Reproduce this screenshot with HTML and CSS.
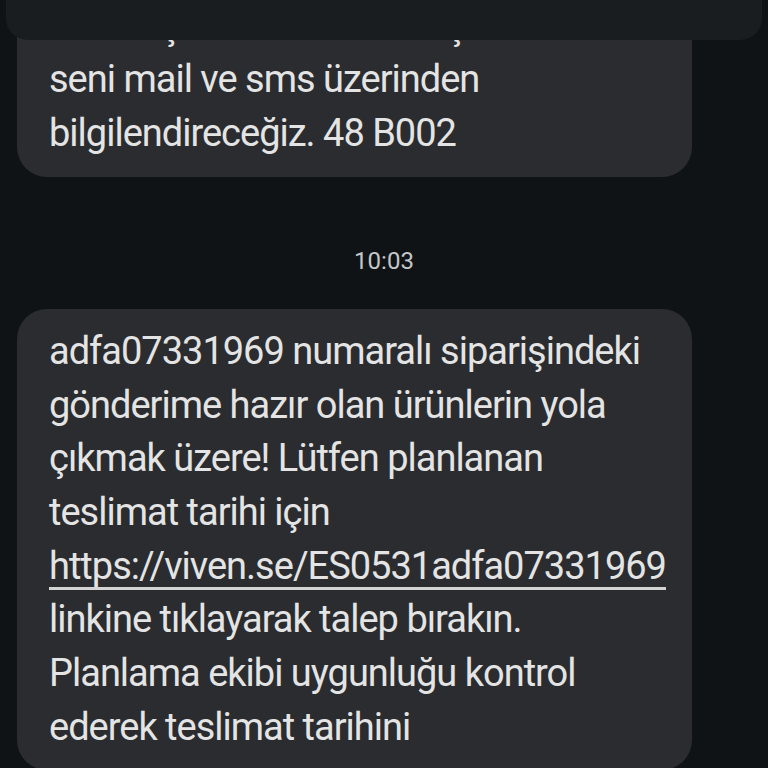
FILE: index.html
```html
<!DOCTYPE html>
<html lang="tr">
<head>
  <meta charset="UTF-8" />
  <title>Mesajlar</title>
  <link rel="stylesheet" href="styles.css">
</head>
<body>

  <div class="top-panel"></div>

  <div class="thread">
    <div class="bubble first">
      <span class="line">Siparişin hazırlandı, depodan çıkınca</span>
      <span class="line">Bunlar şu anda hazır ve aşamalar tamamlanınca</span>
      <span class="line">seni mail ve sms üzerinden</span>
      <span class="line">bilgilendireceğiz. 48 B002</span>
    </div>

    <div class="time">10:03</div>

    <div class="bubble">
      adfa07331969 numaralı siparişindeki
      gönderime hazır olan ürünlerin yola
      çıkmak üzere! Lütfen planlanan
      teslimat tarihi için
      <a href="#" class="link">https://viven.se/ES0531adfa07331969</a>
      linkine tıklayarak talep bırakın.
      Planlama ekibi uygunluğu kontrol
      ederek teslimat tarihini
    </div>
  </div>

</body>
</html>
```

FILE: styles.css
```css
body {
  margin: 0;
  background-color: #101316;
  color: #e4e4e4;
  font-family: Roboto, "Noto Sans", sans-serif;
  height: 768px;
  overflow: hidden;
}

.top-panel {
  position: absolute;
  top: 0;
  left: 6px;
  right: 6px;
  height: 40px;
  background-color: #1a1d20;
  border-radius: 0 0 22px 22px;
  z-index: 2;
}

.thread {
  display: flex;
  flex-direction: column;
  align-items: flex-start;
  padding-left: 17px;
  margin-top: -70px;
}

.bubble {
  width: 675px;
  box-sizing: border-box;
  background-color: #2a2c2f;
  border-radius: 30px;
  padding: 16px 32px;
  font-size: 38px;
  line-height: 53.7px;
  letter-spacing: -1px;
}

.bubble.first {
  overflow: hidden;
}

.line {
  display: block;
  white-space: nowrap;
}

.time {
  align-self: center;
  margin-left: -17px;
  margin-top: 70px;
  margin-bottom: 34px;
  font-size: 24px;
  line-height: 28px;
  color: #c4c7c8;
}

.link {
  color: #e4e4e4;
  text-decoration: underline;
  text-decoration-color: #d4d4d4;
  text-decoration-thickness: 3px;
  text-underline-offset: 8px;
}
```
